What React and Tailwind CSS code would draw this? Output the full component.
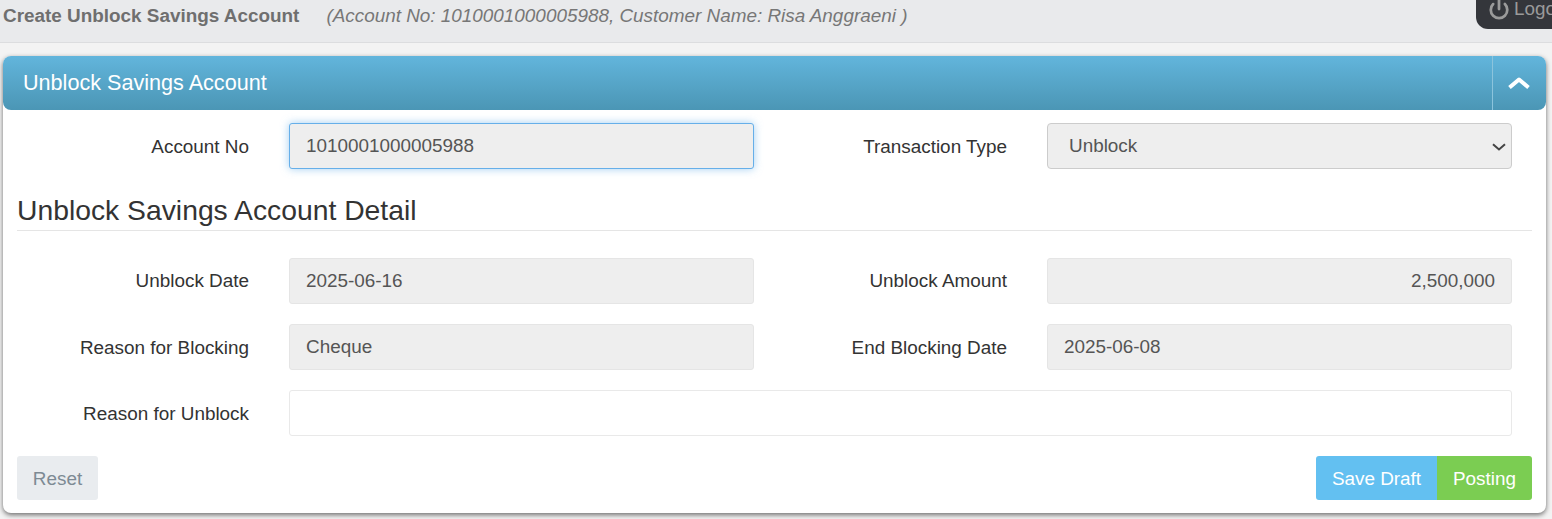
import React from 'react';
import { Power } from 'lucide-react';

const labelClass = 'text-right text-[18.9px] text-[#333333]';
const fieldClass = 'h-[46px] w-full rounded-[3px] border border-[#e5e5e5] bg-[#eeeeee] px-[16px] text-[18.9px] text-[#555555] outline-none';
const rowClass = 'grid grid-cols-[246px_465px_213px_465px] items-center gap-x-[40px]';

const Field = ({ value, right }) => (
  <input
    readOnly
    value={value}
    className={`${fieldClass} ${right ? 'text-right' : ''}`}
  />
);

export default function App() {
  return (
    <div className="relative h-[519px] w-full overflow-hidden bg-[#f3f3f3] font-['Liberation_Sans',Arial,sans-serif]">
      <div className="flex h-[43px] items-start gap-[27px] border-b border-[#dcdddf] bg-[#e9eaec] pl-[3px] pt-[5px] text-[18.9px] leading-[22px]">
        <span className="font-bold text-[#6f6f6f]">Create Unblock Savings Account</span>
        <span className="italic text-[#777777]">(Account No: 1010001000005988, Customer Name: Risa Anggraeni )</span>
      </div>

      <div className="absolute right-[-20px] top-0 flex h-[29px] w-[96px] items-start gap-[4px] rounded-bl-[12px] bg-[#34363b] pl-[12px] text-[18.9px] leading-[18px] text-[#9a9a9a]">
        <Power size={22} strokeWidth={3} className="-mt-[2px]" />
        <span>Logout</span>
      </div>

      <div className="ml-[3px] mt-[13px] w-[1543px] rounded-[8px] bg-white shadow-[0_2px_5px_rgba(0,0,0,0.55)]">
        <div className="flex h-[54px] items-stretch justify-between rounded-[8px] bg-gradient-to-b from-[#62b5dc] to-[#4b96b5] text-white">
          <div className="flex items-center pl-[20px] text-[21.6px]">Unblock Savings Account</div>
          <div className="flex w-[54px] items-center justify-center border-l border-[#8cc4dc]">
            <svg width="22" height="14" viewBox="0 0 22 14" fill="none" className="-ml-[1px] -mt-[1px]">
              <path d="M1.5 11.5 11 3.5l9.5 8" stroke="white" strokeWidth="4" strokeLinejoin="round" />
            </svg>
          </div>
        </div>

        <div className="h-[403px] pt-[13px]">
          <div className={rowClass}>
            <label className={`${labelClass} pt-[2px]`}>Account No</label>
            <input
              readOnly
              value="1010001000005988"
              className="h-[46px] w-full rounded-[3px] border border-[#66afe9] bg-[#eeeeee] px-[16px] text-[18.9px] text-[#555555] shadow-[0_0_8px_rgba(102,175,233,0.6)] outline-none"
            />
            <label className={`${labelClass} pt-[2px]`}>Transaction Type</label>
            <div className="relative">
              <select className="h-[46px] w-full appearance-none rounded-[4px] border border-[#cccccc] bg-[#eeeeee] pl-[21px] text-[18.9px] text-[#555555] outline-none" defaultValue="Unblock">
                <option>Unblock</option>
              </select>
              <svg width="14" height="8" viewBox="0 0 14 8" fill="none" className="pointer-events-none absolute right-[6px] top-[20px]">
                <path d="M1 1.2 7 6.5l6-5.3" stroke="#444444" strokeWidth="2" />
              </svg>
            </div>
          </div>

          <div className="mx-[14px] mt-[25px] border-b border-[#e5e5e5] pb-[3px] text-[28.3px] leading-[33px] text-[#333333]">
            Unblock Savings Account Detail
          </div>

          <div className="mt-[27px] flex flex-col gap-y-[20px]">
            <div className={rowClass}>
              <label className={labelClass}>Unblock Date</label>
              <Field value="2025-06-16" />
              <label className={labelClass}>Unblock Amount</label>
              <Field value="2,500,000" right />
            </div>
            <div className={rowClass}>
              <label className={`${labelClass} pt-[2px]`}>Reason for Blocking</label>
              <Field value="Cheque" />
              <label className={`${labelClass} pt-[2px]`}>End Blocking Date</label>
              <Field value="2025-06-08" />
            </div>
            <div className="grid grid-cols-[246px_1223px] items-center gap-x-[40px]">
              <label className={`${labelClass} pt-[2px]`}>Reason for Unblock</label>
              <input className="h-[46px] w-full rounded-[3px] border border-[#e9e9e9] bg-white px-[16px] text-[18.9px] outline-none" />
            </div>
          </div>

          <div className="mx-[14px] mt-[20px] flex justify-between text-[18.9px]">
            <button className="h-[44px] w-[81px] rounded-[3px] bg-[#e9ecef] pt-[2px] text-[#7d8a94]">Reset</button>
            <div className="flex">
              <button className="h-[44px] w-[121px] rounded-l-[3px] bg-[#63c0f1] pt-[2px] text-white">Save Draft</button>
              <button className="h-[44px] w-[95px] rounded-r-[3px] bg-[#7bcd52] pt-[2px] text-white">Posting</button>
            </div>
          </div>
        </div>
      </div>
    </div>
  );
}
